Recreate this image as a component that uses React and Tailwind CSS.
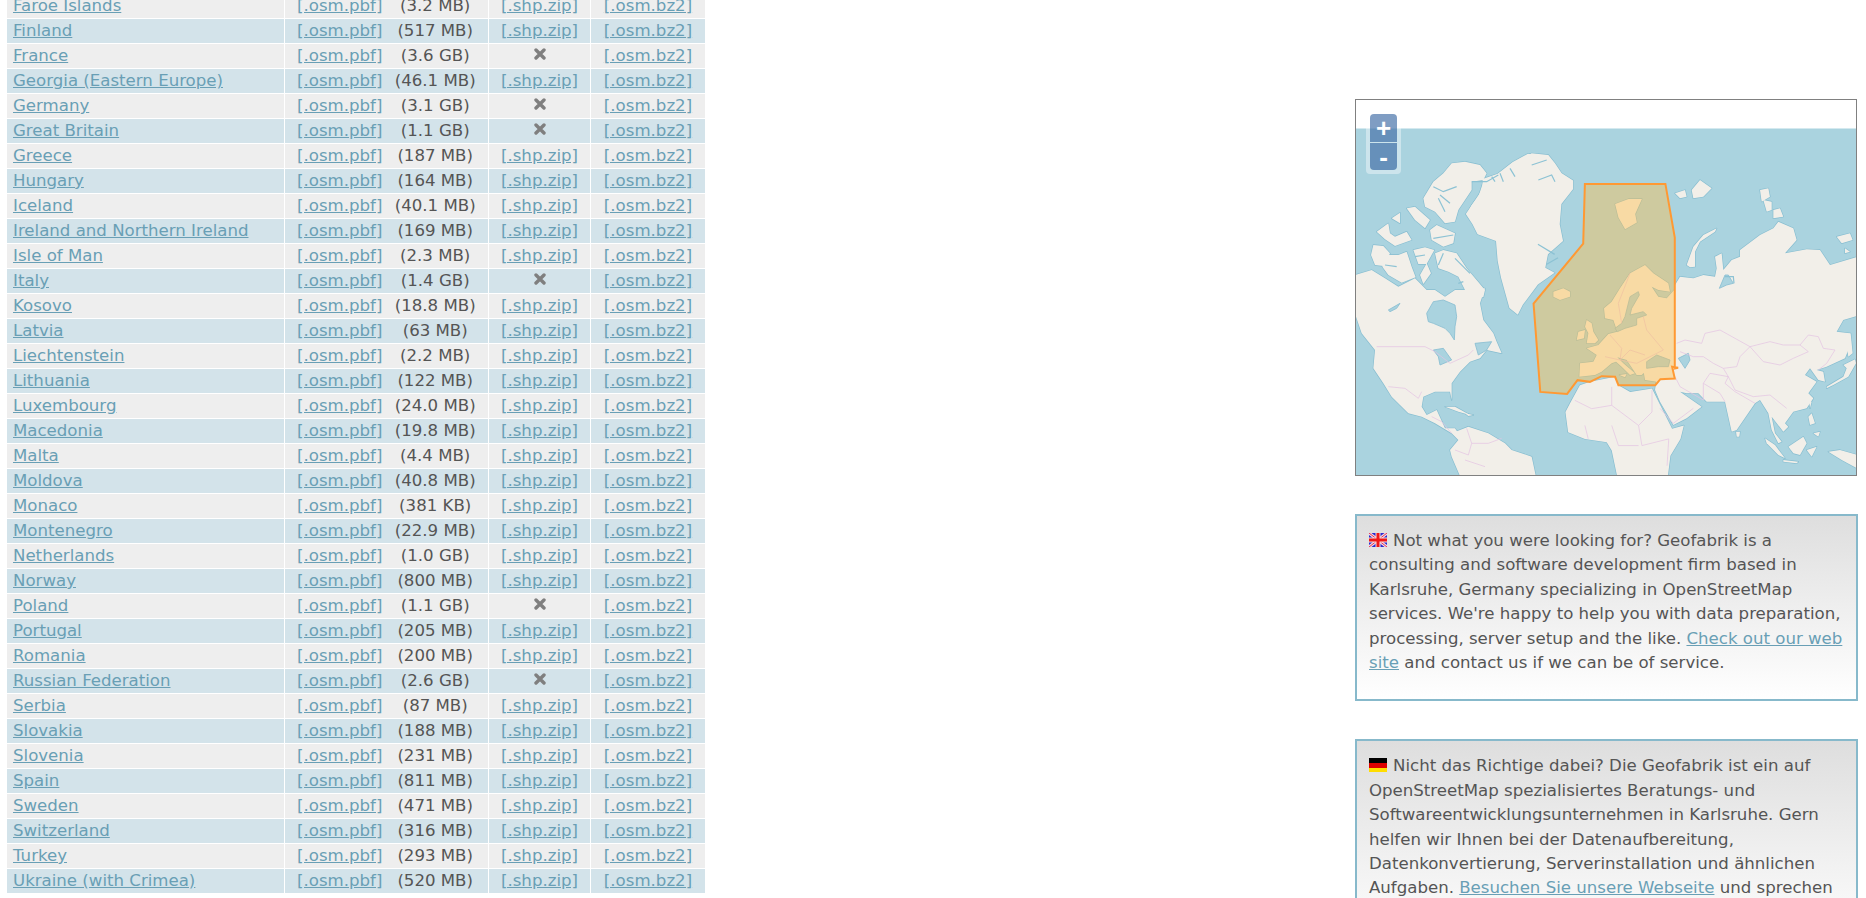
import React from "react";

const rows = [
    ["Faroe Islands", "(3.2 MB)", true],
    ["Finland", "(517 MB)", true],
    ["France", "(3.6 GB)", false],
    ["Georgia (Eastern Europe)", "(46.1 MB)", true],
    ["Germany", "(3.1 GB)", false],
    ["Great Britain", "(1.1 GB)", false],
    ["Greece", "(187 MB)", true],
    ["Hungary", "(164 MB)", true],
    ["Iceland", "(40.1 MB)", true],
    ["Ireland and Northern Ireland", "(169 MB)", true],
    ["Isle of Man", "(2.3 MB)", true],
    ["Italy", "(1.4 GB)", false],
    ["Kosovo", "(18.8 MB)", true],
    ["Latvia", "(63 MB)", true],
    ["Liechtenstein", "(2.2 MB)", true],
    ["Lithuania", "(122 MB)", true],
    ["Luxembourg", "(24.0 MB)", true],
    ["Macedonia", "(19.8 MB)", true],
    ["Malta", "(4.4 MB)", true],
    ["Moldova", "(40.8 MB)", true],
    ["Monaco", "(381 KB)", true],
    ["Montenegro", "(22.9 MB)", true],
    ["Netherlands", "(1.0 GB)", true],
    ["Norway", "(800 MB)", true],
    ["Poland", "(1.1 GB)", false],
    ["Portugal", "(205 MB)", true],
    ["Romania", "(200 MB)", true],
    ["Russian Federation", "(2.6 GB)", false],
    ["Serbia", "(87 MB)", true],
    ["Slovakia", "(188 MB)", true],
    ["Slovenia", "(231 MB)", true],
    ["Spain", "(811 MB)", true],
    ["Sweden", "(471 MB)", true],
    ["Switzerland", "(316 MB)", true],
    ["Turkey", "(293 MB)", true],
    ["Ukraine (with Crimea)", "(520 MB)", true],
];

// traced from zoomed crops, so every shape keeps the origin and scale of its crop
const at = (ox, oy, k, pts) =>
    pts
        .trim()
        .split(/\s+/)
        .map(p => {
            const [x, y] = p.split(",").map(Number);
            return `${ox + x / k},${oy + y / k}`;
        })
        .join(" ");
const big = pts => at(1340, 90, 2.981, pts);
const nw = pts => at(1355, 140, 3, pts);
const eu = pts => at(1530, 260, 3, pts);
const am = pts => at(1355, 300, 3, pts);
const as = pts => at(1660, 160, 3, pts);

const land = [
    // Greenland
    nw("335,225 350,195 370,170 385,125 430,105 470,70 530,40 580,45 600,70 620,100"),
    big("375,370 395,340 425,295 425,265 470,250 515,215 560,190 610,195 640,235 695,270 695,295 660,340 655,400 665,450 620,490 612,530 640,545 590,580 545,640 530,670 505,650 480,560 470,510 465,450 410,430 395,400"),
    // Canadian arctic
    nw("205,175 235,125 265,100 290,70 330,65 375,75 395,100 385,120 350,125 350,150 310,210 300,245 270,250 240,215 210,200"),
    nw("245,255 300,280 295,310 265,320 230,300 225,270"),
    nw("65,275 100,250 105,280 120,290 155,275 170,300 120,318 90,298"),
    nw("155,205 180,200 225,240 210,265 180,240"),
    nw("110,235 135,218 135,250"),
    nw("55,315 85,318 105,340 85,378 60,375 48,345"),
    nw("88,345 130,345 155,335 170,380 182,412 140,428 100,405 82,380"),
    nw("175,330 210,322 238,330 215,372 190,372"),
    nw("240,340 265,330 305,340 335,385 390,450 385,472 340,470 310,410 280,395 250,385"),
    nw("195,405 215,370 228,400 205,432"),
    // North America
    am("0,-75 50,-90 90,-65 130,-40 180,-65 215,-30 240,-30 270,-10 300,-30 345,-30 390,-35 375,10 385,60 415,100 425,125 440,160 395,150 375,175 345,185 315,215 290,250 290,300 285,275 240,275 205,290 200,320 215,345 245,330 270,385 300,385 310,400 290,400 240,370 200,350 160,340 135,315 110,290 85,250 55,205 60,150 20,100 3,50 0,40"),
    am("270,320 300,320 345,345 310,335"),
    am("330,340 355,345 340,348"),
    // South America
    am("290,400 340,380 400,400 450,430 470,450 530,470 545,540 320,540 290,470 285,450 310,420"),
    // Africa
    big("672,960 685,935 715,880 745,870 820,855 830,880 865,900 930,890 950,930 990,1010 1025,1000 1015,1040 985,1090 975,1170 830,1170 810,1075 795,1050 730,1040 680,1020"),
    // Europe
    eu("70,95 100,85 120,95 120,110 90,120 70,110"),
    eu("170,180 185,190 190,215 205,240 195,250 170,250 175,220 165,200"),
    eu("145,215 165,210 162,235 140,240"),
    eu("437,85 410,115 385,110 365,80 385,90 420,95 415,70 370,40 345,15 300,40 270,85 245,125 222,145 225,175 250,180 262,215 235,222 205,255 170,265 200,285 190,305 150,310 148,350 195,345 215,335 245,310 258,305 275,320 300,345 315,340 280,310 262,292 290,300 320,345 335,345 345,335 345,325 340,330 345,360 380,365 437,350"),
    eu("268,345 290,342 285,352"),
    big("820,340 860,325 900,325 880,370 885,395 850,415 830,380"),
    // Asia
    as("45,375 60,350 100,355 130,345 165,350 170,325 165,290 185,280 190,330 215,300 240,290 240,270 300,225 340,205 355,185 400,205 410,240 375,280 440,268 480,270 510,315 610,285 610,462 550,480 530,515 570,520 565,570 555,595 500,620 470,630 490,635 495,665 475,660 450,625 435,645 470,665 445,700 460,715 440,745 400,755 375,790 385,800 370,815 335,770 345,820 365,845 355,850 335,810 325,760 300,720 285,730 230,810 215,815 195,725 140,725 115,700 80,700 60,695 125,740 80,775 40,795 20,760 0,725 -15,690 -10,655 45,648"),
    as("80,315 100,260 130,225 170,205 165,215 120,245 105,275 105,320 90,322"),
    as("45,100 75,90 80,110 60,115"),
    as("95,90 120,60 155,85 130,110 100,115"),
    as("300,90 325,85 330,110 305,125"),
    as("310,120 335,125 335,150 320,155"),
    as("340,150 360,145 370,170 340,175"),
    as("530,230 570,220 578,240 545,250"),
    as("555,265 570,275 555,280"),
    as("555,525 572,520 578,580 565,590"),
    as("500,680 550,650 560,625 550,615 585,598 588,610 565,650 520,675 500,685"),
    as("228,815 240,815 238,830 230,830"),
    as("315,835 345,855 375,895 355,885 320,850"),
    as("385,860 430,830 440,850 420,885 400,880"),
    as("370,900 415,905 410,910 370,905"),
    as("440,870 470,860 455,890"),
    as("445,770 455,760 465,790 450,795"),
    as("460,820 480,815 475,830"),
    as("505,875 540,870 610,890 610,935 545,900"),
    as("448,725 455,725 450,745"),
];

const water = [
    am("215,40 235,5 265,0 300,15 305,50 300,80 298,120 285,100 270,85 235,70 220,65"),
    am("100,30 135,10 125,25 105,35"),
    am("235,150 265,145 290,180 255,195 250,170"),
    am("360,130 410,125 395,150 370,165"),
    eu("300,110 325,95 328,105 305,145 300,165 340,155 350,165 320,175 320,195 285,205 262,215 255,205 275,190 285,170"),
    eu("350,305 380,285 420,300 415,320 385,320 350,325"),
    as("55,595 85,580 90,600 75,625 65,610"),
    as("178,385 200,375 220,370 205,345 195,345"),
];

// fjords and inlets, drawn as thin lines of coast colour
const inlets = [
    nw("235,140 265,155 305,140"),
    nw("255,165 285,190"),
    nw("250,175 270,215"),
    nw("350,125 395,125 430,105"),
    nw("410,110 420,125"),
    nw("435,100 445,125"),
    nw("465,85 480,110"),
    nw("530,75 575,60"),
    nw("550,120 590,105 600,125"),
    nw("235,295 295,285"),
    nw("90,375 125,380"),
    nw("180,350 210,345"),
    nw("265,340 250,375"),
    nw("300,355 345,400"),
    nw("310,430 325,425"),
    big("590,460 640,490"),
    big("615,520 650,500"),
    as("195,350 220,350 222,370"),
];

const borders = [
    am("65,140 210,140 240,155 285,190 340,165 355,150"),
    am("100,260 150,265 190,295 200,275"),
    am("230,350 260,365 290,400"),
    am("335,385 350,430 340,465 300,450"),
    am("350,430 400,430 440,415"),
    am("330,480 390,500"),
    as("50,550 75,540 125,550 135,520 180,510 225,535 270,560 330,545 370,555 420,555 445,525 475,530 490,565 525,570 500,610 475,630"),
    as("270,560 310,605 360,615 400,595 445,575 420,555"),
    as("270,560 240,590 230,620 190,625 205,650 225,690 280,710 330,705 380,745"),
    as("205,650 195,670 225,695 285,730"),
    as("60,575 100,590 130,590 160,610 190,625"),
    as("45,650 60,680 130,720 130,670 150,640 205,650"),
    as("130,670 180,700 195,725"),
    as("0,745 40,790 100,745"),
    big("700,925 750,950 810,940 810,885"),
    big("810,940 890,1000 930,960 930,895"),
    big("890,1000 900,1060 980,1040 975,1120"),
    big("810,1000 830,1060 890,1060"),
    big("730,1000 740,1040"),
    eu("240,225 275,265 270,300 320,310 400,270 350,210 340,170"),
    eu("300,40 265,130 275,190"),
    eu("225,290 270,300 300,270 345,285"),
];

const region = big("730,280 970,280 998,440 998,830 1008,828 990,825 998,860 955,862 940,880 830,880 820,855 780,853 745,870 708,865 677,906 597,900 577,637 725,458");

function WorldMap() {
    return (
        <svg viewBox="1356 100 500 375" className="block w-full h-full">
            <rect x="1356" y="128.5" width="500" height="347" fill="#aad3df" />
            {land.map((p, i) => (
                <polygon key={i} points={p} fill="#86bdd0" stroke="#86bdd0" strokeWidth="1.3" strokeLinejoin="round" />
            ))}
            {land.map((p, i) => (
                <polygon key={i} points={p} fill="#f2efe9" />
            ))}
            {water.map((p, i) => (
                <polygon key={i} points={p} fill="#aad3df" stroke="#86bdd0" strokeWidth="0.8" />
            ))}
            {inlets.map((p, i) => (
                <polyline key={i} points={p} fill="none" stroke="#8cc2d4" strokeWidth="1.2" />
            ))}
            {borders.map((p, i) => (
                <polyline key={i} points={p} fill="none" stroke="#e4c3e2" strokeWidth="0.7" />
            ))}
            <polygon points={region} fill="#ffbe4b" fillOpacity="0.43" stroke="#ff9933" strokeWidth="2" />
        </svg>
    );
}

function ZoomControl() {
    return (
        <div className="absolute left-[10px] top-[10px] p-[4px] rounded-[4px] bg-[rgba(255,255,255,0.4)]">
            <div className="flex flex-col gap-[1px] w-[27px] font-['Liberation_Sans',sans-serif] font-bold text-white">
                <div className="h-[28px] flex items-center justify-center text-[26px] leading-none rounded-t-[4px] bg-[rgba(0,60,136,0.5)]">+</div>
                <div className="h-[27px] flex items-center justify-center text-[26px] leading-none rounded-b-[4px] bg-[rgba(0,60,136,0.5)]">-</div>
            </div>
        </div>
    );
}

function UkFlag() {
    return (
        <svg viewBox="0 0 18 14" className="inline-block w-[18px] h-[14px] align-[-1px] mr-[6px]">
            <rect width="18" height="14" fill="#2a2ad0" />
            <path d="M0 0L18 14M18 0L0 14" stroke="#f4dcdc" strokeWidth="3" />
            <path d="M0 0L18 14M18 0L0 14" stroke="#e8305a" strokeWidth="1" />
            <path d="M9 0V14M0 7H18" stroke="#f4dcdc" strokeWidth="5" />
            <path d="M9 0V14M0 7H18" stroke="#f01818" strokeWidth="3" />
        </svg>
    );
}

function DeFlag() {
    return (
        <svg viewBox="0 0 18 14" className="inline-block w-[18px] h-[14px] align-[-1px] mr-[6px]">
            <rect width="18" height="5" fill="#000000" />
            <rect y="5" width="18" height="5" fill="#dd0000" />
            <rect y="10" width="18" height="4" fill="#ffdd00" />
        </svg>
    );
}

function Nope() {
    return (
        <svg viewBox="0 0 12 12" className="block mx-auto w-[12px] h-[12px] -mt-[5px]">
            <path d="M2 2L10 10M10 2L2 10" stroke="#7f7f7f" strokeWidth="3.4" strokeLinecap="round" />
        </svg>
    );
}

const linkCls = "text-[#699fb5] underline";
const cellBase = "h-6 p-0 whitespace-nowrap";

export default function App() {
    return (
        <div className="h-[898px] overflow-hidden bg-white flex font-['DejaVu_Sans',sans-serif] text-[16.6px] text-[#555555]">
            <div className="ml-[7px] -mt-[7px] w-[698px] shrink-0">
                <table className="w-[700px] -ml-[1px] table-fixed border-separate border-spacing-[1px] leading-[24px]">
                    <colgroup>
                        <col className="w-[277px]" />
                        <col className="w-[203px]" />
                        <col className="w-[101px]" />
                        <col className="w-[114px]" />
                    </colgroup>
                    <tbody>
                        {rows.map(([name, size, shp], i) => {
                            const bg = i % 2 === 0 ? "bg-[#eeeeee]" : "bg-[#d3e3ea]";
                            return (
                                <tr key={name}>
                                    <td className={`${cellBase} ${bg} pl-[6px]`}>
                                        <a href="#" className={linkCls}>{name}</a>
                                    </td>
                                    <td className={`${cellBase} ${bg}`}>
                                        <div className="flex pl-[12px]">
                                            <a href="#" className={linkCls}>[.osm.pbf]</a>
                                            <span className="flex-1 text-center">{size}</span>
                                        </div>
                                    </td>
                                    <td className={`${cellBase} ${bg} text-center`}>
                                        {shp ? <a href="#" className={linkCls}>[.shp.zip]</a> : <Nope />}
                                    </td>
                                    <td className={`${cellBase} ${bg} text-center`}>
                                        <a href="#" className={linkCls}>[.osm.bz2]</a>
                                    </td>
                                </tr>
                            );
                        })}
                    </tbody>
                </table>
            </div>

            <div className="ml-auto mr-[8px] mt-[99px] w-[503px] shrink-0 flex flex-col gap-[38px]">
                <div className="relative w-[502px] h-[377px] border border-[#808080] bg-white">
                    <WorldMap />
                    <ZoomControl />
                </div>
                <div className="border-2 border-[#87b9cb] bg-gradient-to-b from-[#dedede] to-white px-3 pt-[13px] pb-[24px] leading-[24.4px]">
                    <UkFlag />
                    Not what you were looking for? Geofabrik is a consulting and software development firm based in Karlsruhe, Germany specializing in OpenStreetMap services. We're happy to help you with data preparation, processing, server setup and the like.{" "}
                    <a href="#" className={linkCls}>Check out our web site</a> and contact us if we can be of service.
                </div>
                <div className="border-2 border-[#87b9cb] bg-gradient-to-b from-[#dedede] to-white px-3 pt-[13px] pb-[24px] leading-[24.4px]">
                    <DeFlag />
                    Nicht das Richtige dabei? Die Geofabrik ist ein auf OpenStreetMap spezialisiertes Beratungs- und Softwareentwicklungsunternehmen in Karlsruhe. Gern helfen wir Ihnen bei der Datenaufbereitung, Datenkonvertierung, Serverinstallation und ähnlichen Aufgaben.{" "}
                    <a href="#" className={linkCls}>Besuchen Sie unsere Webseite</a> und sprechen Sie uns an, wenn wir Ihnen behilflich sein können.
                </div>
            </div>
        </div>
    );
}
